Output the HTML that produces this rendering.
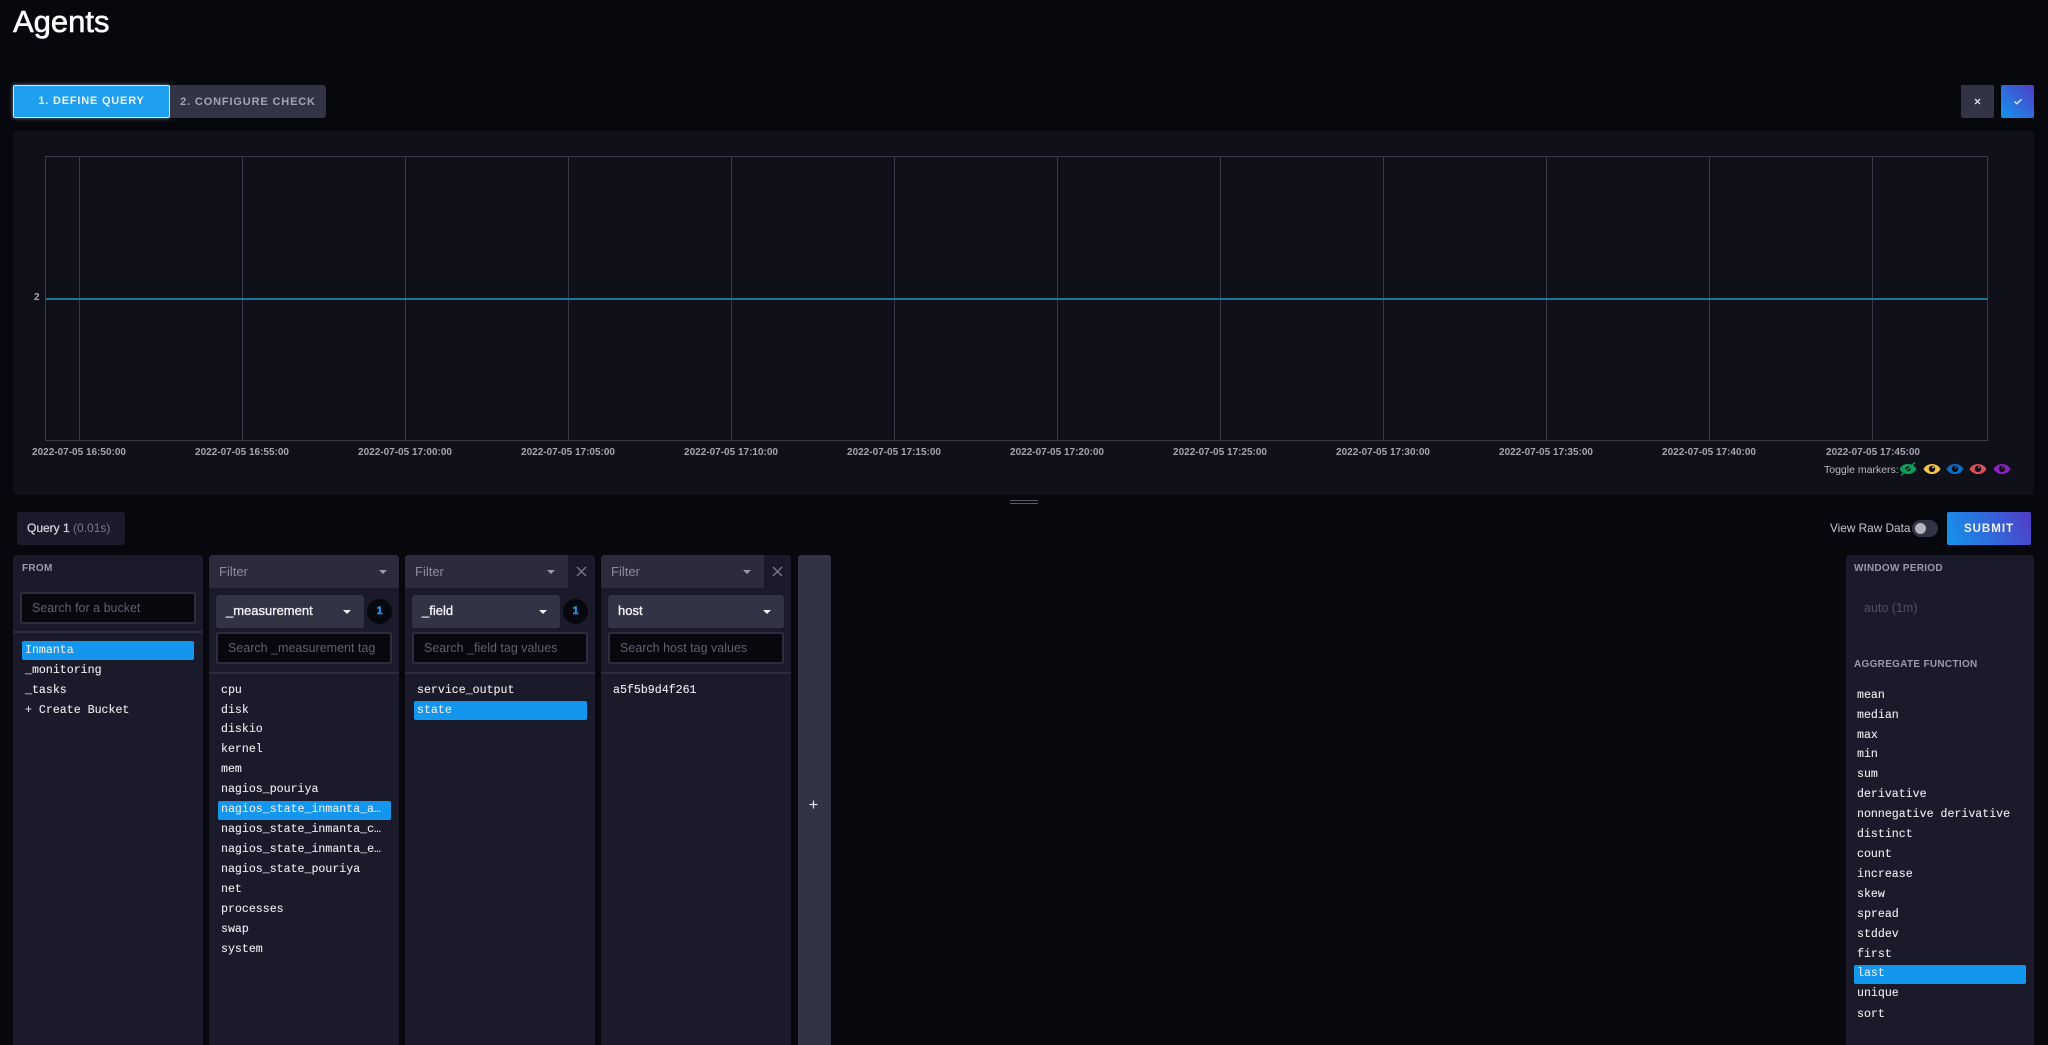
<!DOCTYPE html>
<html>
<head>
<meta charset="utf-8">
<title>Agents</title>
<style>
html,body{margin:0;padding:0;width:2048px;height:1045px;overflow:hidden;background:#07070e;}
body{position:relative;font-family:"Liberation Sans",sans-serif;color:#fff;}
div,span,svg{position:absolute;box-sizing:border-box;}
.t{white-space:nowrap;line-height:1;}
.tick{width:120px;text-align:center;font-size:10px;font-weight:bold;color:#a4a4b2;top:447px;line-height:11px;white-space:nowrap;}
.v{width:1px;top:156px;height:285px;background:#3a3949;}
.panel{background:#1a1a2a;top:555px;height:490px;border-radius:3px 3px 0 0;}
.head{left:0;top:0;height:33px;background:#2b2b3c;border-radius:3px 3px 0 0;}
.ftxt{font-size:13px;color:#8b8b9b;left:10px;top:9px;line-height:15px;}
.caret{width:0;height:0;border-left:4px solid transparent;border-right:4px solid transparent;border-top:4px solid #9a9aa8;}
.sel{left:7px;top:40px;height:33px;background:#333346;border-radius:3px;}
.seltxt{font-size:13px;color:#f1f1f3;left:10px;top:8px;line-height:15px;-webkit-text-stroke:.35px #f1f1f3;}
.badge{top:44px;width:25px;height:25px;border-radius:50%;background:#07070e;color:#1c98ea;font-size:11px;font-weight:bold;text-align:center;line-height:25px;-webkit-text-stroke:.4px #1c98ea;}
.input{background:#07070e;border:2px solid #2c2c3e;border-radius:2px;height:32px;}
.ph{font-size:12.5px;color:#5f5f6f;left:10px;top:7px;white-space:nowrap;line-height:15px;}
.div{left:0;right:0;height:2px;background:#2c2c3e;}
.m{font-family:"Liberation Mono",monospace;font-size:11.6px;font-weight:normal;color:#e9e9ee;white-space:nowrap;line-height:14px;-webkit-text-stroke:.12px #e9e9ee;}
.hl{background:#1296ee;border-radius:2px;height:19px;}
.lab{font-size:10px;font-weight:bold;color:#9a9aa8;letter-spacing:.3px;white-space:nowrap;line-height:12px;}
</style>
</head>
<body>
<div class="t" style="left:13px;top:6px;font-size:31px;line-height:32px;font-weight:500;-webkit-text-stroke:.6px #fff;">Agents</div>

<div style="left:13px;top:85px;width:157px;height:33px;background:#1f9fef;border:1.5px solid #cfe8fb;border-radius:2px;box-shadow:0 0 4px rgba(190,225,250,.55);text-align:center;font-size:11px;font-weight:bold;letter-spacing:.8px;line-height:31px;color:#f1f1f3;">1. DEFINE QUERY</div>
<div style="left:170px;top:85px;width:156px;height:33px;background:#333346;border-radius:0 3px 3px 0;text-align:center;font-size:11px;font-weight:bold;letter-spacing:.85px;line-height:34px;color:#a4a4b2;">2. CONFIGURE CHECK</div>

<div style="left:1961px;top:85px;width:33px;height:33px;background:#333346;border-radius:2px;">
<svg style="left:11px;top:11px" width="11" height="11" viewBox="0 0 11 11"><path d="M3 3L8 8M8 3L3 8" stroke="#dcdce4" stroke-width="1.3" fill="none"/></svg></div>
<div style="left:2001px;top:85px;width:33px;height:33px;background:linear-gradient(45deg,#1296ee,#513cc6);border-radius:2px;">
<svg style="left:11px;top:11px" width="12" height="11" viewBox="0 0 12 11"><path d="M2.5 5.5L4.8 7.8L9.5 3.2" stroke="#e4e4f0" stroke-width="1.4" fill="none"/></svg></div>

<div style="left:13px;top:131px;width:2021px;height:364px;background:#10101a;border-radius:3px;"></div>
<div style="left:45px;top:156px;width:1943px;height:285px;border:1px solid #3a3949;"></div>
<div class="v" style="left:78.5px"></div>
<div class="v" style="left:242px"></div>
<div class="v" style="left:405px"></div>
<div class="v" style="left:568px"></div>
<div class="v" style="left:731px"></div>
<div class="v" style="left:894px"></div>
<div class="v" style="left:1057px"></div>
<div class="v" style="left:1220px"></div>
<div class="v" style="left:1383px"></div>
<div class="v" style="left:1546px"></div>
<div class="v" style="left:1709px"></div>
<div class="v" style="left:1872px"></div>
<div style="left:46px;top:298px;width:1942px;height:2px;background:#157a94;"></div>
<div class="t" style="left:34px;top:292px;font-size:10px;font-weight:bold;color:#a4a4b2;line-height:12px;">2</div>

<div class="tick" style="left:19px">2022-07-05 16:50:00</div>
<div class="tick" style="left:182px">2022-07-05 16:55:00</div>
<div class="tick" style="left:345px">2022-07-05 17:00:00</div>
<div class="tick" style="left:508px">2022-07-05 17:05:00</div>
<div class="tick" style="left:671px">2022-07-05 17:10:00</div>
<div class="tick" style="left:834px">2022-07-05 17:15:00</div>
<div class="tick" style="left:997px">2022-07-05 17:20:00</div>
<div class="tick" style="left:1160px">2022-07-05 17:25:00</div>
<div class="tick" style="left:1323px">2022-07-05 17:30:00</div>
<div class="tick" style="left:1486px">2022-07-05 17:35:00</div>
<div class="tick" style="left:1649px">2022-07-05 17:40:00</div>
<div class="tick" style="left:1813px">2022-07-05 17:45:00</div>

<div class="t" style="left:1824px;top:464px;font-size:10.5px;color:#b9b9c4;line-height:12px;">Toggle markers:</div>
<svg style="left:1899px;top:460px" width="18" height="18" viewBox="0 0 18 18"><path d="M.5 9C4 2.3 14 2.3 17.5 9C14 15.7 4 15.7 .5 9Z" fill="#0f9d58"/><circle cx="9" cy="8.8" r="2.6" fill="#10101a"/><path d="M2 15.5L16 2.5" stroke="#0f9d58" stroke-width="1.4"/></svg>
<svg style="left:1923px;top:460px" width="18" height="18" viewBox="0 0 18 18"><path d="M.5 9C4 2.3 14 2.3 17.5 9C14 15.7 4 15.7 .5 9Z" fill="#f4c542"/><circle cx="9" cy="8.8" r="3.2" fill="#10101a"/><circle cx="10" cy="7.4" r="1" fill="#f4c542"/></svg>
<svg style="left:1946px;top:460px" width="18" height="18" viewBox="0 0 18 18"><path d="M.5 9C4 2.3 14 2.3 17.5 9C14 15.7 4 15.7 .5 9Z" fill="#0d6bc7"/><circle cx="9" cy="8.8" r="3.2" fill="#10101a"/><circle cx="10" cy="7.4" r="1" fill="#0d6bc7"/></svg>
<svg style="left:1969px;top:460px" width="18" height="18" viewBox="0 0 18 18"><path d="M.5 9C4 2.3 14 2.3 17.5 9C14 15.7 4 15.7 .5 9Z" fill="#dc4e58"/><circle cx="9" cy="8.8" r="3.2" fill="#10101a"/><circle cx="10" cy="7.4" r="1" fill="#dc4e58"/></svg>
<svg style="left:1993px;top:460px" width="18" height="18" viewBox="0 0 18 18"><path d="M.5 9C4 2.3 14 2.3 17.5 9C14 15.7 4 15.7 .5 9Z" fill="#8e1fc3"/><circle cx="9" cy="8.8" r="3.2" fill="#10101a"/><circle cx="10" cy="7.4" r="1" fill="#8e1fc3"/></svg>

<div style="left:1010px;top:500px;width:28px;height:1px;background:#5a5a6a;"></div>
<div style="left:1010px;top:503px;width:28px;height:1px;background:#5a5a6a;"></div>

<div style="left:17px;top:512px;width:108px;height:33px;background:#1a1a2a;border-radius:3px;"></div>
<div class="t" style="left:27px;top:521px;font-size:12px;line-height:15px;color:#d0d0d8;-webkit-text-stroke:.3px #d0d0d8;">Query 1 <span style="position:static;color:#77778a;-webkit-text-stroke:0;">(0.01s)</span></div>

<div class="t" style="left:1830px;top:521px;font-size:11.8px;line-height:14px;color:#c8c8d2;">View Raw Data</div>
<div style="left:1912px;top:520px;width:26px;height:17px;border-radius:9px;background:#333346;"></div>
<div style="left:1915px;top:523px;width:11px;height:11px;border-radius:50%;background:#b5b5c0;"></div>
<div style="left:1947px;top:512px;width:84px;height:33px;background:linear-gradient(65deg,#1296ee,#513cc6);border-radius:2px;text-align:center;font-size:11.5px;font-weight:bold;letter-spacing:1px;line-height:34px;color:#f1f1f3;">SUBMIT</div>

<!-- FROM -->
<div class="panel" style="left:13px;width:190px;">
  <div class="lab" style="left:9px;top:8px;">FROM</div>
  <div class="input" style="left:7px;top:37px;width:176px;"><span class="ph">Search for a bucket</span></div>
  <div class="div" style="top:76px;"></div>
  <div class="hl" style="left:9px;top:86px;width:172px;"></div>
  <div class="m" style="left:12px;top:89px;">Inmanta</div>
  <div class="m" style="left:12px;top:109px;">_monitoring</div>
  <div class="m" style="left:12px;top:129px;">_tasks</div>
  <div class="m" style="left:12px;top:149px;">+ Create Bucket</div>
</div>

<!-- measurement -->
<div class="panel" style="left:209px;width:190px;">
  <div class="head" style="width:190px;"><span class="ftxt">Filter</span><span class="caret" style="left:170px;top:15px;"></span></div>
  <div class="sel" style="width:148px;"><span class="seltxt">_measurement</span><span class="caret" style="left:127px;top:15px;border-top-color:#f1f1f3;"></span></div>
  <div class="badge" style="left:158px;">1</div>
  <div class="input" style="left:7px;top:77px;width:176px;overflow:hidden;"><span class="ph">Search _measurement tag</span></div>
  <div class="div" style="top:117px;"></div>
  <div class="m" style="left:12px;top:129px;">cpu</div>
  <div class="m" style="left:12px;top:149px;">disk</div>
  <div class="m" style="left:12px;top:168px;">diskio</div>
  <div class="m" style="left:12px;top:188px;">kernel</div>
  <div class="m" style="left:12px;top:208px;">mem</div>
  <div class="m" style="left:12px;top:228px;">nagios_pouriya</div>
  <div class="hl" style="left:9px;top:246px;width:173px;"></div>
  <div class="m" style="left:12px;top:248px;">nagios_state_inmanta_a…</div>
  <div class="m" style="left:12px;top:268px;">nagios_state_inmanta_c…</div>
  <div class="m" style="left:12px;top:288px;">nagios_state_inmanta_e…</div>
  <div class="m" style="left:12px;top:308px;">nagios_state_pouriya</div>
  <div class="m" style="left:12px;top:328px;">net</div>
  <div class="m" style="left:12px;top:348px;">processes</div>
  <div class="m" style="left:12px;top:368px;">swap</div>
  <div class="m" style="left:12px;top:388px;">system</div>
</div>

<!-- field -->
<div class="panel" style="left:405px;width:190px;">
  <div class="head" style="width:163px;border-radius:3px 0 0 0;"><span class="ftxt">Filter</span><span class="caret" style="left:142px;top:15px;"></span></div>
  <svg style="left:170px;top:10px" width="13" height="13" viewBox="0 0 13 13"><path d="M2 2L11 11M11 2L2 11" stroke="#77778a" stroke-width="1.4" fill="none"/></svg>
  <div class="sel" style="width:148px;"><span class="seltxt">_field</span><span class="caret" style="left:127px;top:15px;border-top-color:#f1f1f3;"></span></div>
  <div class="badge" style="left:158px;">1</div>
  <div class="input" style="left:7px;top:77px;width:176px;"><span class="ph">Search _field tag values</span></div>
  <div class="div" style="top:117px;"></div>
  <div class="m" style="left:12px;top:129px;">service_output</div>
  <div class="hl" style="left:9px;top:146px;width:173px;"></div>
  <div class="m" style="left:12px;top:149px;">state</div>
</div>

<!-- host -->
<div class="panel" style="left:601px;width:190px;">
  <div class="head" style="width:163px;border-radius:3px 0 0 0;"><span class="ftxt">Filter</span><span class="caret" style="left:142px;top:15px;"></span></div>
  <svg style="left:170px;top:10px" width="13" height="13" viewBox="0 0 13 13"><path d="M2 2L11 11M11 2L2 11" stroke="#77778a" stroke-width="1.4" fill="none"/></svg>
  <div class="sel" style="width:176px;"><span class="seltxt">host</span><span class="caret" style="left:155px;top:15px;border-top-color:#f1f1f3;"></span></div>
  <div class="input" style="left:7px;top:77px;width:176px;"><span class="ph">Search host tag values</span></div>
  <div class="div" style="top:117px;"></div>
  <div class="m" style="left:12px;top:129px;">a5f5b9d4f261</div>
</div>

<!-- add -->
<div style="left:798px;top:555px;width:33px;height:490px;background:#333346;border-radius:3px 3px 0 0;"></div>
<svg style="left:808px;top:799px" width="11" height="11" viewBox="0 0 11 11"><path d="M1.5 5.5H9.5M5.5 1.5V9.5" stroke="#e4e4ea" stroke-width="1.2" fill="none"/></svg>

<!-- right -->
<div class="panel" style="left:1846px;width:188px;">
  <div class="lab" style="left:8px;top:8px;">WINDOW PERIOD</div>
  <div class="t" style="left:18px;top:46px;font-size:12.5px;line-height:14px;color:#4f4f5f;">auto (1m)</div>
  <div class="lab" style="left:8px;top:104px;">AGGREGATE FUNCTION</div>
  <div class="m" style="left:11px;top:134px;">mean</div>
  <div class="m" style="left:11px;top:154px;">median</div>
  <div class="m" style="left:11px;top:174px;">max</div>
  <div class="m" style="left:11px;top:193px;">min</div>
  <div class="m" style="left:11px;top:213px;">sum</div>
  <div class="m" style="left:11px;top:233px;">derivative</div>
  <div class="m" style="left:11px;top:253px;">nonnegative derivative</div>
  <div class="m" style="left:11px;top:273px;">distinct</div>
  <div class="m" style="left:11px;top:293px;">count</div>
  <div class="m" style="left:11px;top:313px;">increase</div>
  <div class="m" style="left:11px;top:333px;">skew</div>
  <div class="m" style="left:11px;top:353px;">spread</div>
  <div class="m" style="left:11px;top:373px;">stddev</div>
  <div class="m" style="left:11px;top:393px;">first</div>
  <div class="hl" style="left:8px;top:410px;width:172px;"></div>
  <div class="m" style="left:11px;top:412px;">last</div>
  <div class="m" style="left:11px;top:432px;">unique</div>
  <div class="m" style="left:11px;top:453px;">sort</div>
</div>
</body>
</html>
